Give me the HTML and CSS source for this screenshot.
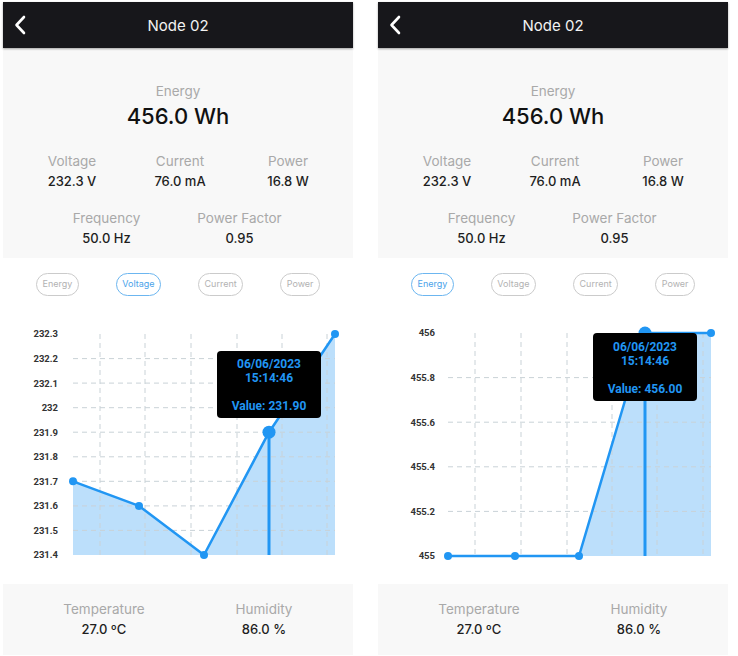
FILE: index.html
```html
<!DOCTYPE html>
<html>
<head>
<meta charset="utf-8">
<link rel="stylesheet" href="styles.css">
</head>
<body>
<div class="screens">
  <div class="phone">
    <div class="header">
      <svg class="back" width="24" height="44" viewBox="0 0 24 44"><path d="M21 15 L13.5 23 L21 31" fill="none" stroke="#fff" stroke-width="2.6" stroke-linecap="round" stroke-linejoin="round"/></svg>
      <div class="title">Node 02</div>
    </div>
    <div class="stats">
      <div class="label">Energy</div>
      <div class="big">456.0 Wh</div>
      <div class="row3">
        <div class="cell"><div class="label">Voltage</div><div class="value">232.3 V</div></div>
        <div class="cell"><div class="label">Current</div><div class="value">76.0 mA</div></div>
        <div class="cell"><div class="label">Power</div><div class="value">16.8 W</div></div>
      </div>
      <div class="row2">
        <div class="cell"><div class="label">Frequency</div><div class="value">50.0 Hz</div></div>
        <div class="cell"><div class="label">Power Factor</div><div class="value">0.95</div></div>
      </div>
    </div>
    <div class="chips">
      <div class="chip">Energy</div>
      <div class="chip active">Voltage</div>
      <div class="chip">Current</div>
      <div class="chip">Power</div>
    </div>
    <div class="chart">
      <svg width="350" height="269" viewBox="0 0 350 269">
        <g class="ylabels" text-anchor="end">
          <text x="55" y="22.4">232.3</text>
          <text x="55" y="47">232.2</text>
          <text x="55" y="71.5">232.1</text>
          <text x="55" y="96.1">232</text>
          <text x="55" y="120.6">231.9</text>
          <text x="55" y="145.2">231.8</text>
          <text x="55" y="169.7">231.7</text>
          <text x="55" y="194.3">231.6</text>
          <text x="55" y="218.8">231.5</text>
          <text x="55" y="243.4">231.4</text>
        </g>
        <polygon points="70,166.3 136,190.9 201,240 266,117.2 332,19 332,240 70,240" fill="rgba(33,150,243,0.3)"/>
        <g class="grid">
          <line x1="70" y1="43.6" x2="332" y2="43.6"/>
          <line x1="70" y1="68.1" x2="332" y2="68.1"/>
          <line x1="70" y1="92.7" x2="332" y2="92.7"/>
          <line x1="70" y1="117.2" x2="332" y2="117.2"/>
          <line x1="70" y1="141.8" x2="332" y2="141.8"/>
          <line x1="70" y1="166.3" x2="332" y2="166.3"/>
          <line x1="70" y1="190.9" x2="332" y2="190.9"/>
          <line x1="70" y1="215.4" x2="332" y2="215.4"/>
          <line x1="97" y1="19" x2="97" y2="240"/>
          <line x1="142" y1="19" x2="142" y2="240"/>
          <line x1="188" y1="19" x2="188" y2="240"/>
          <line x1="234" y1="19" x2="234" y2="240"/>
          <line x1="279" y1="19" x2="279" y2="240"/>
          <line x1="324" y1="19" x2="324" y2="240"/>
        </g>
        <polyline points="70,166.3 136,190.9 201,240 266,117.2 332,19" class="series"/>
        <line x1="266" y1="117.2" x2="266" y2="240" class="cursor"/>
        <g class="dots">
          <circle cx="70" cy="166.3" r="4"/>
          <circle cx="136" cy="190.9" r="4"/>
          <circle cx="201" cy="240" r="4"/>
          <circle cx="266" cy="117.2" r="6.5"/>
          <circle cx="332" cy="19" r="4"/>
        </g>
      </svg>
      <div class="tooltip tip-left">
        <div>06/06/2023</div>
        <div>15:14:46</div>
        <div>&nbsp;</div>
        <div>Value: 231.90</div>
      </div>
    </div>
    <div class="env">
      <div class="cell"><div class="label">Temperature</div><div class="value">27.0 ºC</div></div>
      <div class="cell"><div class="label">Humidity</div><div class="value">86.0 %</div></div>
    </div>
  </div>

  <div class="phone">
    <div class="header">
      <svg class="back" width="24" height="44" viewBox="0 0 24 44"><path d="M21 15 L13.5 23 L21 31" fill="none" stroke="#fff" stroke-width="2.6" stroke-linecap="round" stroke-linejoin="round"/></svg>
      <div class="title">Node 02</div>
    </div>
    <div class="stats">
      <div class="label">Energy</div>
      <div class="big">456.0 Wh</div>
      <div class="row3">
        <div class="cell"><div class="label">Voltage</div><div class="value">232.3 V</div></div>
        <div class="cell"><div class="label">Current</div><div class="value">76.0 mA</div></div>
        <div class="cell"><div class="label">Power</div><div class="value">16.8 W</div></div>
      </div>
      <div class="row2">
        <div class="cell"><div class="label">Frequency</div><div class="value">50.0 Hz</div></div>
        <div class="cell"><div class="label">Power Factor</div><div class="value">0.95</div></div>
      </div>
    </div>
    <div class="chips">
      <div class="chip active">Energy</div>
      <div class="chip">Voltage</div>
      <div class="chip">Current</div>
      <div class="chip">Power</div>
    </div>
    <div class="chart">
      <svg width="350" height="269" viewBox="0 0 350 269">
        <g class="ylabels" text-anchor="end">
          <text x="57" y="21.4">456</text>
          <text x="57" y="66">455.8</text>
          <text x="57" y="110.6">455.6</text>
          <text x="57" y="155.2">455.4</text>
          <text x="57" y="199.8">455.2</text>
          <text x="57" y="244.4">455</text>
        </g>
        <polygon points="201,241 267,18 333,18 333,241" fill="rgba(33,150,243,0.3)"/>
        <g class="grid">
          <line x1="70" y1="62.6" x2="333" y2="62.6"/>
          <line x1="70" y1="107.2" x2="333" y2="107.2"/>
          <line x1="70" y1="151.8" x2="333" y2="151.8"/>
          <line x1="70" y1="196.4" x2="333" y2="196.4"/>
          <line x1="97" y1="18" x2="97" y2="241"/>
          <line x1="143" y1="18" x2="143" y2="241"/>
          <line x1="189" y1="18" x2="189" y2="241"/>
          <line x1="234" y1="18" x2="234" y2="241"/>
          <line x1="279" y1="18" x2="279" y2="241"/>
          <line x1="325" y1="18" x2="325" y2="241"/>
        </g>
        <polyline points="70,241 137,241 201,241 267,18 333,18" class="series"/>
        <line x1="267" y1="18" x2="267" y2="241" class="cursor"/>
        <g class="dots">
          <circle cx="70" cy="241" r="4"/>
          <circle cx="137" cy="241" r="4"/>
          <circle cx="201" cy="241" r="4"/>
          <circle cx="267" cy="18" r="6.5"/>
          <circle cx="333" cy="18" r="4"/>
        </g>
      </svg>
      <div class="tooltip tip-right">
        <div>06/06/2023</div>
        <div>15:14:46</div>
        <div>&nbsp;</div>
        <div>Value: 456.00</div>
      </div>
    </div>
    <div class="env">
      <div class="cell"><div class="label">Temperature</div><div class="value">27.0 ºC</div></div>
      <div class="cell"><div class="label">Humidity</div><div class="value">86.0 %</div></div>
    </div>
  </div>
</div>
</body>
</html>
```
FILE: styles.css
```css
* { box-sizing: border-box; }
html, body { margin: 0; padding: 0; background: #fff; }
body { font-family: "Inter", "Noto Sans", sans-serif; color: #1e1e1e; }

.screens {
  display: flex;
  gap: 25px;
  padding: 2px 0 0 3px;
}

.phone {
  width: 350px;
  display: flex;
  flex-direction: column;
}

.header {
  height: 46px;
  background: #17171b;
  position: relative;
  display: flex;
  align-items: center;
  justify-content: center;
  box-shadow: 0 1px 2px rgba(0,0,0,0.35);
  z-index: 1;
}
.back { position: absolute; left: 0; top: 0; }
.title { color: #f2f2f2; font-size: 15px; font-weight: 400; }

.stats {
  height: 210px;
  background: #f8f8f8;
  padding-top: 33px;
  text-align: center;
}
.label { font-size: 13.5px; line-height: 20px; color: #a9a9a9; }
.value { font-size: 13px; line-height: 20px; font-weight: 500; color: #1e1e1e; }
.big { font-size: 22px; line-height: 30px; font-weight: 500; color: #111; margin-bottom: 20px; }

.row3 {
  display: grid;
  grid-template-columns: repeat(3, 108px);
  padding-left: 15px;
}
.row2 {
  display: grid;
  grid-template-columns: repeat(2, 133px);
  padding-left: 37px;
  margin-top: 17px;
}

.chips {
  display: flex;
  justify-content: center;
  gap: 37px;
  margin-top: 15px;
}
.chip {
  height: 23px;
  padding: 0 5.5px;
  border: 1.5px solid #cbcbcb;
  border-radius: 12px;
  font-size: 9px;
  line-height: 20px;
  color: #b2b2b2;
}
.chip.active { border-color: #6cb6f0; color: #4aa3ea; }

.chart {
  position: relative;
  margin-top: 19px;
  height: 269px;
}
.chart svg { display: block; }
.ylabels { font-family: "Roboto", sans-serif; font-weight: 700; font-size: 9.5px; fill: #333; }
.grid line { stroke: #c9d2d7; stroke-width: 1; stroke-dasharray: 5 4; }
.series { fill: none; stroke: #2196f3; stroke-width: 2.5; stroke-linejoin: round; }
.cursor { stroke: #2196f3; stroke-width: 3; }
.dots circle { fill: #2196f3; }

.tooltip {
  position: absolute;
  width: 104px;
  height: 67px;
  background: #000;
  border-radius: 4px;
  padding-top: 6px;
  text-align: center;
  font-family: "Roboto", sans-serif;
  font-weight: 700;
  font-size: 12px;
  line-height: 14px;
  color: #2196f3;
}
.tip-left { left: 214px; top: 36px; }
.tip-right { left: 215px; top: 18px; height: 68px; padding-top: 7px; }

.env {
  height: 71px;
  background: #f8f8f8;
  display: grid;
  grid-template-columns: repeat(2, 160px);
  padding: 15px 0 0 21px;
  text-align: center;
}
```
